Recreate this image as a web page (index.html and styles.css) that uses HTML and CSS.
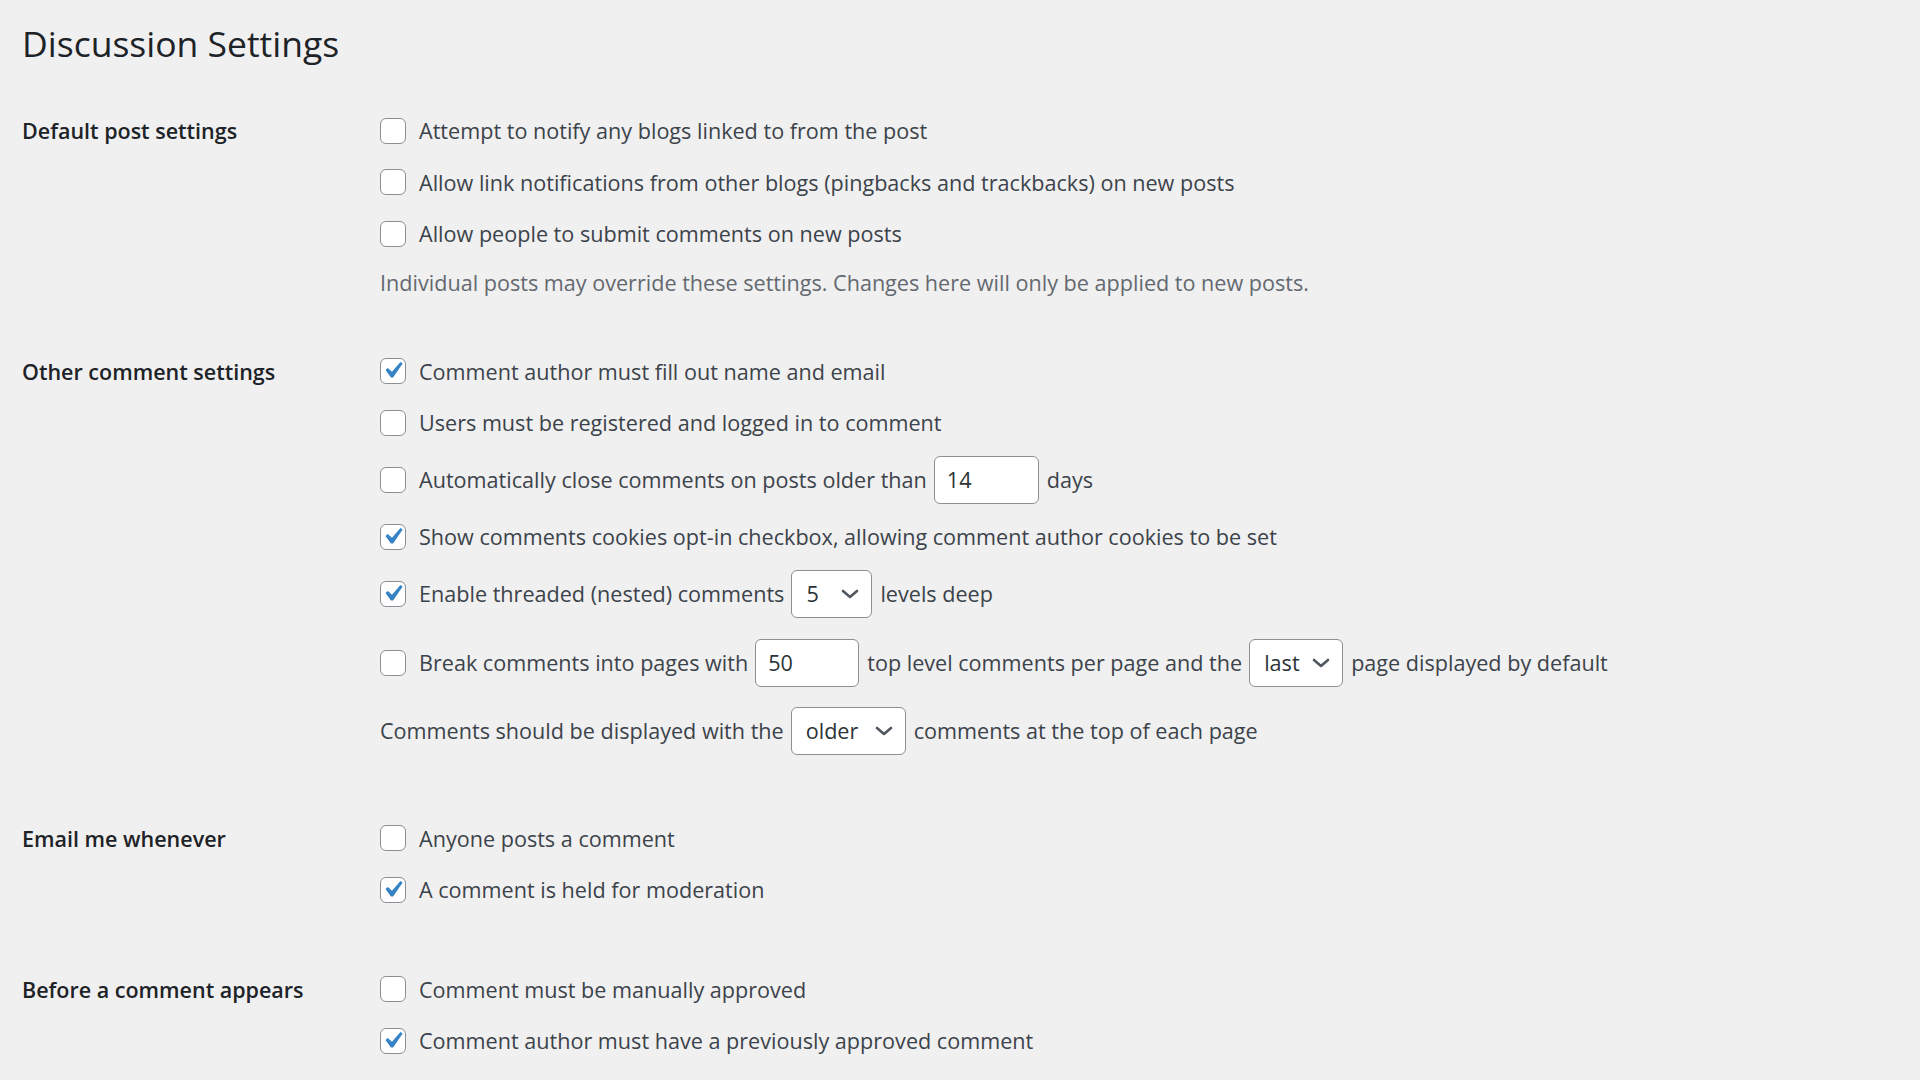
FILE: index.html
```html
<!DOCTYPE html>
<html lang="en">
<head>
<meta charset="utf-8">
<title>Discussion Settings</title>
<link rel="stylesheet" href="styles.css">
</head>
<body>
<main class="wrap">
  <h1 class="title">Discussion Settings</h1>

  <section class="section s1">
    <div class="th">Default post settings</div>
    <div class="td">
      <label class="row"><span class="cb"></span>Attempt to notify any blogs linked to from the post</label>
      <label class="row"><span class="cb"></span>Allow link notifications from other blogs (pingbacks and trackbacks) on new posts</label>
      <label class="row"><span class="cb"></span>Allow people to submit comments on new posts</label>
      <p class="desc">Individual posts may override these settings. Changes here will only be applied to new posts.</p>
    </div>
  </section>

  <section class="section s2">
    <div class="th">Other comment settings</div>
    <div class="td">
      <label class="row"><span class="cb checked"><svg class="tick" viewBox="0 0 20 20"><path d="M14.83 4.89l1.34.94-5.81 8.38H9.02L5.78 9.67l1.34-1.25 2.57 2.4z"/></svg></span>Comment author must fill out name and email</label>
      <label class="row"><span class="cb"></span>Users must be registered and logged in to comment</label>
      <div class="row tall"><span class="cb"></span>Automatically close comments on posts older than<span class="field w-days">14</span>days</div>
      <label class="row"><span class="cb checked"><svg class="tick" viewBox="0 0 20 20"><path d="M14.83 4.89l1.34.94-5.81 8.38H9.02L5.78 9.67l1.34-1.25 2.57 2.4z"/></svg></span>Show comments cookies opt-in checkbox, allowing comment author cookies to be set</label>
      <div class="row tall"><span class="cb checked"><svg class="tick" viewBox="0 0 20 20"><path d="M14.83 4.89l1.34.94-5.81 8.38H9.02L5.78 9.67l1.34-1.25 2.57 2.4z"/></svg></span>Enable threaded (nested) comments<span class="select w-depth">5<svg class="chev" viewBox="0 0 18 10"><path d="M2 2l7 6 7-6"/></svg></span>levels deep</div>
      <div class="row break"><span class="cb"></span>Break comments into pages with<span class="field w-pages">50</span>top level comments per page and the<span class="select w-last">last<svg class="chev" viewBox="0 0 18 10"><path d="M2 2l7 6 7-6"/></svg></span>page displayed by default</div>
      <div class="row tall last">Comments should be displayed with the<span class="select w-older">older<svg class="chev" viewBox="0 0 18 10"><path d="M2 2l7 6 7-6"/></svg></span>comments at the top of each page</div>
    </div>
  </section>

  <section class="section s3">
    <div class="th">Email me whenever</div>
    <div class="td">
      <label class="row"><span class="cb"></span>Anyone posts a comment</label>
      <label class="row"><span class="cb checked"><svg class="tick" viewBox="0 0 20 20"><path d="M14.83 4.89l1.34.94-5.81 8.38H9.02L5.78 9.67l1.34-1.25 2.57 2.4z"/></svg></span>A comment is held for moderation</label>
    </div>
  </section>

  <section class="section s4">
    <div class="th">Before a comment appears</div>
    <div class="td">
      <label class="row"><span class="cb"></span>Comment must be manually approved</label>
      <label class="row"><span class="cb checked"><svg class="tick" viewBox="0 0 20 20"><path d="M14.83 4.89l1.34.94-5.81 8.38H9.02L5.78 9.67l1.34-1.25 2.57 2.4z"/></svg></span>Comment author must have a previously approved comment</label>
    </div>
  </section>
</main>
</body>
</html>
```

FILE: styles.css
```css
html, body {
  margin: 0;
  padding: 0;
  background: #f0f0f1;
}

body {
  font-family: "Open Sans", "Noto Sans", sans-serif;
  color: #3c434a;
  overflow: hidden;
}

.wrap {
  padding: 21px 0 0 22px;
}

.title {
  margin: 0;
  font-size: 35.5px;
  font-weight: 400;
  line-height: 45px;
  color: #1d2327;
}

.section {
  display: grid;
  grid-template-columns: 358px 1fr;
}

.s1 { margin-top: 39px; }
.s2 { margin-top: 40px; }
.s3 { margin-top: 51px; }
.s4 { margin-top: 48px; }

.th {
  height: 51.5px;
  display: flex;
  align-items: center;
  font-size: 21.5px;
  font-weight: 600;
  color: #1d2327;
}

.td {
  display: flex;
  flex-direction: column;
}

.row {
  height: 51.5px;
  display: flex;
  align-items: center;
  font-size: 21.6px;
  white-space: nowrap;
}

.row.tall { height: 62.5px; }
.row.break { height: 75px; }
.row.tall.last { height: 61.5px; }

.desc {
  margin: 0;
  height: 46px;
  display: flex;
  align-items: center;
  font-size: 21.6px;
  color: #646970;
  white-space: nowrap;
}

.cb {
  position: relative;
  flex: none;
  width: 26px;
  height: 26px;
  box-sizing: border-box;
  border: 1.5px solid #8c8f94;
  border-radius: 6px;
  background: #fff;
  margin-right: 13px;
}

.tick {
  position: absolute;
  left: -5px;
  top: -5px;
  width: 33px;
  height: 33px;
  fill: #3582c4;
}

.field,
.select {
  flex: none;
  display: flex;
  align-items: center;
  box-sizing: border-box;
  height: 48px;
  border: 1.5px solid #8c8f94;
  border-radius: 6px;
  background: #fff;
  color: #2c3338;
  margin: 0 8px 0 7px;
}

.field { padding-left: 12px; }

.select {
  justify-content: space-between;
  padding: 0 12px 0 14px;
}

.w-days { width: 105px; }
.w-pages { width: 104px; }
.w-depth { width: 81px; }
.w-last { width: 94px; }
.w-older { width: 115px; }

.chev {
  width: 18px;
  height: 10px;
  fill: none;
  stroke: #50575e;
  stroke-width: 2.6;
  stroke-linecap: round;
  stroke-linejoin: round;
}
```
